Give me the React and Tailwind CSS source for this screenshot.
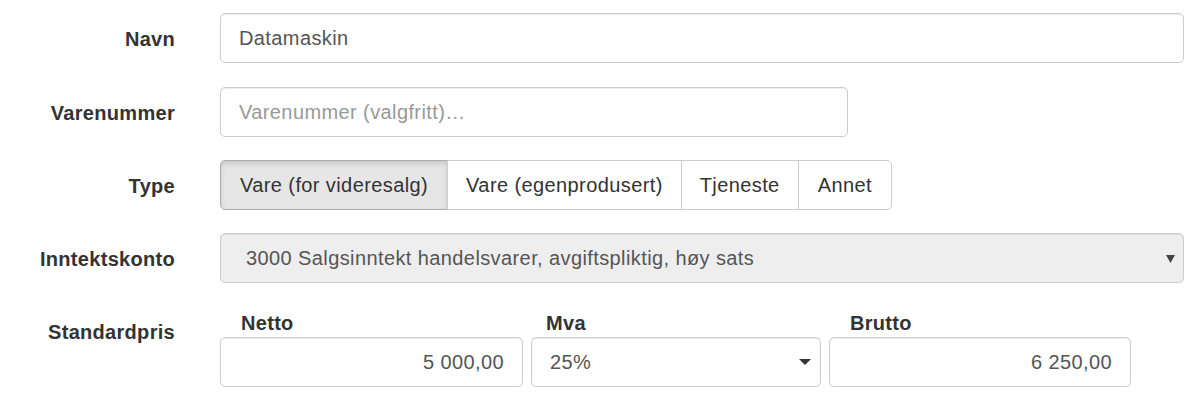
const inputCls =
  "h-[50px] rounded-[5px] border border-[#ccc] bg-white px-[18px] text-[20px] tracking-[0.4px] text-[#555] shadow-[inset_0_1px_1px_rgba(0,0,0,0.075)] outline-none placeholder:text-[#999]";

const Label = ({ children }) => (
  <div className="w-[175px] shrink-0 pt-[2px] text-right text-[20px] font-bold tracking-[0.3px] text-[#333]">
    {children}
  </div>
);

const types = ["Vare (for videresalg)", "Vare (egenprodusert)", "Tjeneste", "Annet"];

const App = () => {
  return (
    <div className="min-h-[399px] w-[1199px] bg-white pr-[15px] pt-[13px] font-['Liberation_Sans',Arial,sans-serif]">
      {/* Navn */}
      <div className="mb-[24px] flex h-[50px] items-center">
        <Label>Navn</Label>
        <input readOnly defaultValue="Datamaskin" className={`${inputCls} ml-[45px] flex-1`} />
      </div>

      {/* Varenummer */}
      <div className="mb-[23px] flex h-[50px] items-center">
        <Label>Varenummer</Label>
        <input readOnly placeholder="Varenummer (valgfritt)…" className={`${inputCls} ml-[45px] w-[628px]`} />
      </div>

      {/* Type */}
      <div className="mb-[23px] flex h-[50px] items-center">
        <Label>Type</Label>
        <div className="ml-[45px] flex h-[50px]">
          {types.map((t, i) => (
            <button
              key={t}
              className={
                i === 0
                  ? "h-[50px] rounded-l-[5px] border border-[#adadad] bg-[#e6e6e6] px-[19px] text-[20px] tracking-[0.4px] text-[#333] shadow-[inset_0_3px_5px_rgba(0,0,0,0.125)]"
                  : i === types.length - 1
                  ? "-ml-px h-[50px] rounded-r-[5px] border border-[#ccc] bg-white px-[19px] text-[20px] tracking-[0.4px] text-[#333]"
                  : "-ml-px h-[50px] border border-[#ccc] bg-white px-[18px] text-[20px] tracking-[0.4px] text-[#333]"
              }
            >
              {t}
            </button>
          ))}
        </div>
      </div>

      {/* Inntektskonto */}
      <div className="mb-[16px] flex h-[50px] items-center">
        <Label>Inntektskonto</Label>
        <div className="ml-[45px] flex h-[50px] flex-1 items-center justify-between rounded-[5px] border border-[#ccc] bg-[#eee] pl-[25px] pr-[8px] text-[20px] tracking-[0.4px] text-[#555] shadow-[inset_0_1px_1px_rgba(0,0,0,0.075)]">
          <span>3000 Salgsinntekt handelsvarer, avgiftspliktig, høy sats</span>
          <svg width="9" height="9" viewBox="0 0 9 9">
            <polygon points="0,1 9,1 4.5,9" fill="#444" />
          </svg>
        </div>
      </div>

      {/* Standardpris */}
      <div className="flex items-start">
        <div className="mt-[7px] flex h-[50px] items-center">
          <Label>Standardpris</Label>
        </div>
        <div className="ml-[45px] flex gap-[8px]">
          <div className="flex w-[303px] flex-col">
            <div className="pl-[21px] pt-[11px] text-[20px] font-bold leading-[26px] tracking-[0.3px] text-[#333]">Netto</div>
            <input readOnly defaultValue="5 000,00" className={`${inputCls} mt-[1px] w-full text-right`} />
          </div>
          <div className="flex w-[290px] flex-col">
            <div className="pl-[15px] pt-[11px] text-[20px] font-bold leading-[26px] tracking-[0.3px] text-[#333]">Mva</div>
            <div className="mt-[1px] flex h-[50px] items-center justify-between rounded-[5px] border border-[#ccc] bg-white pl-[18px] pr-[9px] text-[20px] tracking-[0.4px] text-[#555] shadow-[inset_0_1px_1px_rgba(0,0,0,0.075)]">
              <span>25%</span>
              <svg width="12" height="6" viewBox="0 0 12 6">
                <polygon points="0,0 12,0 6,6" fill="#333" />
              </svg>
            </div>
          </div>
          <div className="flex w-[302px] flex-col">
            <div className="pl-[21px] pt-[11px] text-[20px] font-bold leading-[26px] tracking-[0.3px] text-[#333]">Brutto</div>
            <input readOnly defaultValue="6 250,00" className={`${inputCls} mt-[1px] w-full text-right`} />
          </div>
        </div>
      </div>
    </div>
  );
};

export default App;
